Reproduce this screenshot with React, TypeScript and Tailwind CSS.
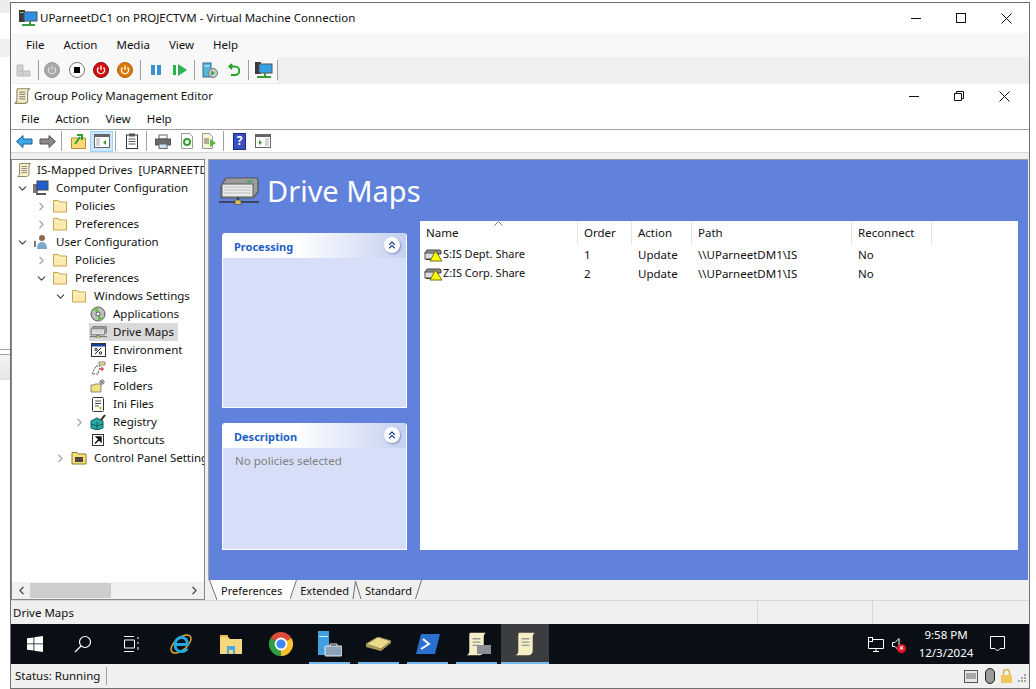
import type { ReactNode } from 'react';
import { ChevronDown, ChevronRight, ChevronLeft, ChevronsUp } from 'lucide-react';

const ui = 'font-["Noto_Sans",sans-serif]';

// --- small drawn icons, all hand traced from the screenshot ---

function Scroll({ size = 16 }: { size?: number }) {
  return (
    <svg width={size} height={size} viewBox="0 0 16 16" className="shrink-0">
      <path d="M4 1.5h10.5c-1 .8-1.5 2-1.5 3.5v7c0 1.5-1 2.500-2.500 2.500H1.500c1.300-.5 2-1.400 2-2.500V3c0-.8.2-1.200.5-1.500z" fill="#f6eec4" stroke="#8c8a6a" />
      <path d="M5.500 4.500h5.500M5.500 6.500h5.500M5.500 8.500h5.500M5.500 10.500h5.500" stroke="#8f8f8f" />
    </svg>
  );
}

function Folder() {
  return (
    <svg width="16" height="16" viewBox="0 0 16 16" className="shrink-0">
      <path d="M1.500 2.500h5l1 1.500h7v10h-13z" fill="#fde9b0" stroke="#c9a94f" />
      <path d="M2 5.500h12" stroke="#fff6d0" />
    </svg>
  );
}

function Drive({ width, height }: { width: number; height: number }) {
  return (
    <svg width={width} height={height} viewBox="0 0 40 28" className="shrink-0">
      <path d="M2 9 7 1h31l1 2v12l-5 6H2z" fill="#9c9c9c" stroke="#555" strokeWidth="1.200" />
      <rect x="3" y="7" width="31" height="13" fill="#e8ece8" stroke="#6a6a6a" strokeWidth="1.200" />
      <path d="M5 10h27M5 13h27M5 16h27" stroke="#bdbdbd" strokeWidth="1.200" />
      <rect x="28" y="3.500" width="5" height="1.800" fill="#22b14c" />
      <path d="M19 20v5M0 25h40" stroke="#333" strokeWidth="1.600" />
      <rect x="16" y="23" width="6" height="4.500" fill="#d8c45a" stroke="#555" strokeWidth=".8" />
    </svg>
  );
}

function WarnDrive() {
  return (
    <svg width="19" height="14" viewBox="0 0 19 14" className="shrink-0">
      <path d="M1 5 3 2h13l1 1v3H1z" fill="#8e8e8e" stroke="#444" />
      <rect x="1" y="5" width="13" height="6" fill="#dcdcdc" stroke="#555" />
      <path d="M2 11.500h10" stroke="#333" />
      <path d="M11.500 3 18 13H6z" fill="#ffff00" stroke="#6b6b1f" />
    </svg>
  );
}

function PowerDot({ bg, ring, icon, className }: { bg: string; ring: string; icon: string; className: string }) {
  return (
    <svg width="16" height="16" viewBox="0 0 16 16" className={`shrink-0 ${className}`}>
      <circle cx="8" cy="8" r="7.500" fill={bg} stroke={ring} />
      <path d="M5.500 5.500a3.600 3.600 0 1 0 5 0M8 3.500V8" fill="none" stroke={icon} strokeWidth="1.300" />
    </svg>
  );
}

function WinMin() {
  return (
    <svg width="10" height="10" viewBox="0 0 10 10" fill="none" stroke="#111">
      <path d="M0 5.500h10" />
    </svg>
  );
}

function WinMax() {
  return (
    <svg width="10" height="10" viewBox="0 0 10 10" fill="none" stroke="#111">
      <rect x=".5" y=".5" width="9" height="9" />
    </svg>
  );
}

function WinRestore() {
  return (
    <svg width="10" height="10" viewBox="0 0 10 10" fill="none" stroke="#111">
      <path d="M.5 2.500h7v7h-7zM2.500 2.500v-2h7v7h-2" />
    </svg>
  );
}

function WinClose() {
  return (
    <svg width="11" height="11" viewBox="0 0 11 11" fill="none" stroke="#111">
      <path d="M.5.5l10 10M10.500.5l-10 10" />
    </svg>
  );
}

function TreeChevron({ open }: { open?: boolean }) {
  return open ? (
    <ChevronDown size={13} strokeWidth={2} className="text-[#404040]" />
  ) : (
    <ChevronRight size={13} strokeWidth={2.400} className="text-[#a8a8a8]" />
  );
}

function TreeRow({
  depth,
  open,
  leaf,
  icon,
  label,
  selected,
}: {
  depth: number;
  open?: boolean;
  leaf?: boolean;
  icon: ReactNode;
  label: string;
  selected?: boolean;
}) {
  return (
    <div className="flex h-[18px] items-center" style={{ paddingLeft: depth * 19 + 4 }}>
      <span className="flex w-[13px] shrink-0 justify-center">{leaf ? null : <TreeChevron open={open} />}</span>
      <span className={`ml-[3px] flex h-full items-center pl-[1px] pr-[4px] ${selected ? 'bg-[#d9d9d9]' : ''}`}>
        <span className="flex w-[16px] shrink-0 justify-center">{icon}</span>
        <span className="ml-[7px] whitespace-nowrap leading-[18px]">{label}</span>
      </span>
    </div>
  );
}

function PolicyBox({ title, bodyHeight, children }: { title: string; bodyHeight: string; children?: ReactNode }) {
  return (
    <div className="w-[185px] overflow-hidden rounded-t-[3px] border-x border-white">
      <div className="flex h-[25px] items-center justify-between bg-gradient-to-r from-white from-40% to-[#c5d0f0] pl-[11px] pr-[6px] pt-[3px]">
        <span className="text-[11px] font-bold text-[#215dc6]">{title}</span>
        <span className="mb-[5px] flex h-[16px] w-[16px] items-center justify-center rounded-full bg-white shadow-[1px_1px_2px_#7f8fc0]">
          <ChevronsUp size={12} strokeWidth={2.200} className="text-[#1c3f9c]" />
        </span>
      </div>
      <div className={`border-b border-white bg-[#d6dff7] px-[12px] pt-[4px] text-[#808080] ${bodyHeight}`}>{children}</div>
    </div>
  );
}

function Sep({ className }: { className: string }) {
  return <span className={`h-[20px] w-px shrink-0 bg-[#a0a0a0] ${className}`} />;
}

function Slot({ w, children }: { w: string; children: ReactNode }) {
  return <div className={`flex h-full shrink-0 items-center justify-center ${w}`}>{children}</div>;
}

function TaskIcon({ children, active }: { children: ReactNode; active?: boolean }) {
  return (
    <div className={`relative flex h-full shrink-0 items-center justify-center ${active ? 'w-[48px] bg-[#3b3d40]' : 'w-[49px]'}`}>
      {children}
      <span className={`absolute bottom-0 h-[2px] bg-[#76b9ed] ${active ? 'inset-x-0' : 'inset-x-[4px]'}`} />
    </div>
  );
}

function Col({ w, border, children }: { w: string; border?: boolean; children: ReactNode }) {
  return <span className={`flex h-full shrink-0 items-center pl-[6px] ${w} ${border ? 'border-l border-[#e5e5e5]' : ''}`}>{children}</span>;
}

const rows = [
  { name: 'S:IS Dept. Share', order: '1' },
  { name: 'Z:IS Corp. Share', order: '2' },
];

export default function App() {
  return (
    <div className={`flex h-[689px] w-[1036px] overflow-hidden bg-white text-[11.5px] text-[#111] ${ui}`}>
      {/* window peeking out behind the VM */}
      <div className="flex w-[10px] shrink-0 flex-col">
        <div className="h-[13px] bg-[#ececec]" />
        <div className="mt-[26px] h-[18px] bg-[#f0f0f0]" />
        <div className="mt-[292px] h-[5px] border-t border-[#a0a0a0]" />
        <div className="h-[26px] border-t border-[#a0a0a0] bg-gradient-to-b from-[#f4f4f4] to-[#e4e4e4]" />
      </div>

      <div className="mt-[2px] flex h-[687px] w-[1020px] shrink-0 flex-col border border-[#707070]">
        {/* VM title bar */}
        <div className="flex h-[30px] shrink-0 items-center bg-white pl-[8px]">
          <svg width="19" height="18" viewBox="0 0 19 18" className="shrink-0">
            <rect x="0" y="1" width="6" height="12" fill="#3a3a3a" />
            <rect x="1" y="3" width="4" height="1" fill="#7fd27f" />
            <rect x="5" y="3" width="13" height="9" fill="#2a8fe6" stroke="#555" />
            <path d="M11 12v3M3 16h13" stroke="#3c9a3c" strokeWidth="2" />
          </svg>
          <span className="ml-[2px]">UParneetDC1 on PROJECTVM - Virtual Machine Connection</span>
          <div className="ml-auto flex items-center gap-[35px] pr-[17px]">
            <WinMin />
            <WinMax />
            <WinClose />
          </div>
        </div>

        {/* VM menu */}
        <div className="flex h-[24px] shrink-0 items-center gap-[19px] bg-[#f8f8f8] pl-[15px]">
          {['File', 'Action', 'Media', 'View', 'Help'].map((m) => (
            <span key={m}>{m}</span>
          ))}
        </div>

        {/* VM toolbar */}
        <div className="flex h-[27px] shrink-0 bg-[#efefef]">
          <div className="flex h-[26px] w-[267px] items-center bg-[#f8f8f8]">
            <svg width="16" height="13" viewBox="0 0 16 13" className="ml-[5px] shrink-0">
              <path d="M1 7V1h6v6h7v5H1z" fill="#cfcfcf" stroke="#bdbdbd" />
              <path d="M1 7h6v5" fill="none" stroke="#bdbdbd" />
            </svg>
            <Sep className="ml-[6px]" />
            <PowerDot className="ml-[5px]" bg="#a8a8a8" ring="#9a9a9a" icon="#dcdcdc" />
            <span className="ml-[9px] flex h-[16px] w-[16px] shrink-0 items-center justify-center rounded-full border border-[#777] bg-white">
              <span className="h-[6px] w-[6px] bg-black" />
            </span>
            <PowerDot className="ml-[8px]" bg="#d40f12" ring="#8a0c0c" icon="#fff" />
            <PowerDot className="ml-[8px]" bg="#d97706" ring="#b56205" icon="#fff" />
            <Sep className="ml-[7px]" />
            <svg width="12" height="12" viewBox="0 0 12 12" className="ml-[9px] shrink-0">
              <path d="M1 1h4v10H1zM7 1h4v10H7z" fill="#3d8fd1" />
            </svg>
            <svg width="15" height="12" viewBox="0 0 15 12" className="ml-[11px] shrink-0">
              <path d="M0 1h3v10H0z M5 0l9 6-9 6z" fill="#2bb24c" />
            </svg>
            <Sep className="ml-[6px]" />
            <svg width="16" height="16" viewBox="0 0 16 16" className="ml-[7px] shrink-0">
              <rect x="1" y="1" width="8" height="14" fill="#58b4d8" stroke="#2d6e8c" />
              <path d="M2 4h6" stroke="#d8f0fa" />
              <circle cx="11" cy="11" r="4.500" fill="#c8c8c8" stroke="#777" />
              <path d="M9 8.500l4 2.500-4 2.500z" fill="#2bb24c" />
            </svg>
            <svg width="12" height="14" viewBox="0 0 12 14" className="ml-[10px] shrink-0">
              <path d="M4 1 1.500 3.500 4 6M2 3.500h5a3.800 3.800 0 0 1 0 8.500H3" fill="none" stroke="#2aa12a" strokeWidth="2" />
            </svg>
            <Sep className="ml-[8px]" />
            <svg width="18" height="17" viewBox="0 0 18 17" className="ml-[6px] shrink-0">
              <rect x="0" y="0" width="6" height="12" fill="#3a3a3a" />
              <rect x="4" y="2" width="13" height="9" fill="#35a0e6" stroke="#555" />
              <path d="M10 11v3M2 15h14" stroke="#3c9a3c" strokeWidth="2" />
            </svg>
            <Sep className="ml-[4px]" />
          </div>
        </div>

        {/* GPME title + menu */}
        <div className="flex h-[24px] shrink-0 items-center bg-white pl-[2px]">
          <Scroll size={18} />
          <span className="ml-[3px]">Group Policy Management Editor</span>
          <div className="ml-auto flex items-center gap-[35px] pr-[19px]">
            <WinMin />
            <WinRestore />
            <WinClose />
          </div>
        </div>
        <div className="flex h-[22px] shrink-0 items-center gap-[16px] border-b border-[#a0a0a0] bg-white pl-[10px]">
          {['File', 'Action', 'View', 'Help'].map((m) => (
            <span key={m}>{m}</span>
          ))}
        </div>

        {/* GPME toolbar */}
        <div className="flex h-[23px] shrink-0 items-center border-b border-[#d8d8d8] bg-white">
          <svg width="17" height="13" viewBox="0 0 17 13" className="ml-[5px] shrink-0">
            <path d="M7 .5 .5 6.500 7 12.500V9h9V4H7z" fill="#3fa9e8" stroke="#1a5f9c" />
          </svg>
          <svg width="17" height="13" viewBox="0 0 17 13" className="ml-[6px] shrink-0">
            <path d="M10 .5 16.500 6.500 10 12.500V9H1V4h9z" fill="#8a8a8a" stroke="#555" />
          </svg>
          <Sep className="ml-[5px]" />
          <svg width="15" height="16" viewBox="0 0 15 16" className="ml-[9px] shrink-0">
            <path d="M.5 5h14v10.500H.5z" fill="#fbd878" stroke="#b58f30" />
            <path d="M4 11 9 4M6 2h5v5" fill="none" stroke="#2f9e2f" strokeWidth="2" />
          </svg>
          <span className="ml-[4px] flex h-[21px] w-[23px] shrink-0 items-center justify-center border border-[#99d1ff] bg-[#cce8ff]">
            <svg width="16" height="14" viewBox="0 0 16 14">
              <rect x=".5" y=".5" width="15" height="13" fill="#fff" stroke="#666" />
              <rect x="1" y="1" width="14" height="2" fill="#666" />
              <path d="M2 5h4M2 7h4M2 9h4M2 11h4" stroke="#aaa" />
              <path d="M12 6v5L9 8.500z" fill="#2f9e2f" />
            </svg>
          </span>
          <Sep className="ml-[2px]" />
          <svg width="12" height="16" viewBox="0 0 12 16" className="ml-[10px] shrink-0">
            <rect x=".5" y="2" width="11" height="13.500" fill="#fff" stroke="#333" />
            <rect x="3" y=".5" width="6" height="3" fill="#555" />
            <path d="M2.500 6h7M2.500 8.500h7M2.500 11h7" stroke="#555" />
          </svg>
          <Sep className="ml-[8px]" />
          <svg width="16" height="15" viewBox="0 0 16 15" className="ml-[8px] shrink-0">
            <rect x="4" y="1" width="8" height="4" fill="#fff" stroke="#666" />
            <rect x=".5" y="5" width="15" height="6" fill="#6a6a6a" stroke="#555" />
            <rect x="4" y="10" width="8" height="4.500" fill="#cfe6f7" stroke="#666" />
          </svg>
          <svg width="14" height="16" viewBox="0 0 14 16" className="ml-[9px] shrink-0">
            <path d="M1.500.5h8l3 3v12h-11z" fill="#fff" stroke="#999" />
            <circle cx="7" cy="9" r="3" fill="none" stroke="#2f9e2f" strokeWidth="2" />
          </svg>
          <svg width="16" height="16" viewBox="0 0 16 16" className="ml-[7px] shrink-0">
            <path d="M1.500.5h7l3 3v12h-10z" fill="#fbf5d8" stroke="#999" />
            <path d="M3 6h5M3 8h5M3 10h5" stroke="#666" />
            <path d="M9 6l6 4-6 4z" fill="#5dbb3f" />
          </svg>
          <Sep className="ml-[6px]" />
          <span className="ml-[9px] flex h-[17px] w-[13px] shrink-0 items-center justify-center border border-[#1c2a80] bg-[#3a4fc0] text-[12px] font-bold leading-none text-white">?</span>
          <svg width="16" height="14" viewBox="0 0 16 14" className="ml-[9px] shrink-0">
            <rect x=".5" y=".5" width="15" height="13" fill="#fff" stroke="#666" />
            <rect x="1" y="1" width="14" height="2" fill="#666" />
            <path d="M10 5h4M10 7h4M10 9h4M10 11h4" stroke="#aaa" />
            <path d="M4 6v5l3-2.500z" fill="#2f9e2f" />
          </svg>
        </div>

        {/* main split */}
        <div className="flex min-h-0 flex-1 bg-[#f0f0f0] pt-[6px]">
          <div className="flex w-[194px] shrink-0 flex-col border border-[#828790] bg-white">
            <div className="min-h-0 flex-1 overflow-hidden pt-[1px]">
              <div className="flex h-[18px] items-center pl-[4px]">
                <Scroll />
                <span className="ml-[5px] whitespace-pre">IS-Mapped Drives  [UPARNEETD</span>
              </div>
              <TreeRow depth={0} open icon={<svg width="16" height="16" viewBox="0 0 16 16"><rect x="0" y="4" width="5" height="9" fill="#777" /><rect x="4" y="1" width="11" height="9" fill="#1d5fd0" stroke="#444" /><path d="M3 14h10" stroke="#555" strokeWidth="2" /></svg>} label="Computer Configuration" />
              <TreeRow depth={1} icon={<Folder />} label="Policies" />
              <TreeRow depth={1} icon={<Folder />} label="Preferences" />
              <TreeRow depth={0} open icon={<svg width="16" height="16" viewBox="0 0 16 16"><circle cx="9" cy="4" r="3" fill="#8a6a4a" /><path d="M4 15c0-5 2-7 5-7s5 2 5 7z" fill="#7fa8c8" /><path d="M2 7v6" stroke="#777" strokeWidth="2" /></svg>} label="User Configuration" />
              <TreeRow depth={1} icon={<Folder />} label="Policies" />
              <TreeRow depth={1} open icon={<Folder />} label="Preferences" />
              <TreeRow depth={2} open icon={<Folder />} label="Windows Settings" />
              <TreeRow depth={3} leaf icon={<svg width="16" height="16" viewBox="0 0 16 16"><circle cx="8" cy="8" r="7" fill="#bdbdbd" stroke="#555" /><path d="M8 8 3 3a7 7 0 0 1 5-2zM8 8l5 5a7 7 0 0 1-5 2z" fill="#6fbf4a" /><circle cx="8" cy="8" r="2" fill="#fff" stroke="#555" /></svg>} label="Applications" />
              <TreeRow depth={3} leaf icon={<Drive width={17} height={14} />} label="Drive Maps" selected />
              <TreeRow depth={3} leaf icon={<svg width="15" height="14" viewBox="0 0 15 14"><rect x=".5" y=".5" width="14" height="13" fill="#fff" stroke="#333" /><rect x="1" y="1" width="13" height="2.500" fill="#1c3f9c" /><path d="M4 11l6-6" stroke="#222" /><circle cx="5" cy="6.500" r="1.200" fill="none" stroke="#222" /><circle cx="9.500" cy="10" r="1.200" fill="none" stroke="#222" /></svg>} label="Environment" />
              <TreeRow depth={3} leaf icon={<svg width="16" height="16" viewBox="0 0 16 16"><path d="M2 14 6 6h4l-2 8z" fill="#fff" stroke="#555" strokeDasharray="2 1" /><path d="M9 2h6v3H9z" fill="#f2e27a" stroke="#888" /><path d="M10 9h4M12 7v4" stroke="#d01515" /></svg>} label="Files" />
              <TreeRow depth={3} leaf icon={<svg width="16" height="16" viewBox="0 0 16 16"><path d="M1 7h3l1-1h6v8H1z" fill="#f2e27a" stroke="#888" /><path d="M12 1v6M9 4h6M10 2l4 4M14 2l-4 4" stroke="#777" /></svg>} label="Folders" />
              <TreeRow depth={3} leaf icon={<svg width="14" height="16" viewBox="0 0 14 16"><rect x="1.500" y="1.500" width="11" height="14" rx="1" fill="#fff" stroke="#333" /><path d="M4 5h6M4 7.500h6M4 10h4" stroke="#555" /><circle cx="9.500" cy="12" r="1.500" fill="#d8c030" /></svg>} label="Ini Files" />
              <TreeRow depth={3} icon={<svg width="16" height="16" viewBox="0 0 16 16"><path d="M1 7 7 4l6 3v7l-6 2-6-2z" fill="#2aa6a6" stroke="#0f5f5f" /><path d="M1 10l6 2 6-2M7 8v8" fill="none" stroke="#0f5f5f" /><path d="M11 6 15 1" stroke="#222" strokeWidth="2" /></svg>} label="Registry" />
              <TreeRow depth={3} leaf icon={<svg width="12" height="12" viewBox="0 0 12 12"><rect x=".5" y=".5" width="11" height="11" fill="#fff" stroke="#333" /><path d="M3 9.500 8 4.500M4.500 3h4.500v4.500z" fill="#111" stroke="#111" strokeWidth="1.400" /></svg>} label="Shortcuts" />
              <TreeRow depth={2} icon={<svg width="16" height="14" viewBox="0 0 16 14"><path d="M1 1.500h5l1 1.500h8v10H1z" fill="#f7e37a" stroke="#8f7d2a" /><path d="M4 6h8v5H4z" fill="#444" /><path d="M5 9h2M9 8h2" stroke="#e03030" /></svg>} label="Control Panel Settings" />
            </div>
            <div className="flex h-[17px] shrink-0 items-center bg-[#f0f0f0] pl-[3px] pr-[3px]">
              <ChevronLeft size={13} strokeWidth={2.500} className="text-[#555]" />
              <div className="ml-[2px] h-[15px] w-[81px] bg-[#cdcdcd]" />
              <ChevronRight size={13} strokeWidth={2.500} className="ml-auto text-[#555]" />
            </div>
          </div>

          <div className="ml-[3px] flex min-w-0 flex-1 flex-col pr-[1px]">
            <div className="flex min-h-0 flex-1 flex-col border-t border-l border-[#a0a0a0] bg-[#6082dc] pr-[10px]">
              <div className="flex h-[61px] shrink-0 items-center pl-[10px]">
                <Drive width={40} height={28} />
                <span className="ml-[8px] text-[29px] leading-none text-white">Drive Maps</span>
              </div>
              <div className="flex min-h-0 flex-1 pb-[30px] pl-[13px]">
                <div className="flex w-[185px] shrink-0 flex-col justify-start gap-[15px] pt-[12px]">
                  <PolicyBox title="Processing" bodyHeight="h-[150px]" />
                  <PolicyBox title="Description" bodyHeight="h-[102px]">
                    No policies selected
                  </PolicyBox>
                </div>
                <div className="ml-[13px] flex-1 bg-white">
                  <div className="relative flex h-[24px] items-center">
                    <svg width="9" height="5" viewBox="0 0 9 5" fill="none" stroke="#777" className="absolute left-[74px] top-0">
                      <path d="M.5 4.500l4-4 4 4" />
                    </svg>
                    <Col w="w-[157px]">Name</Col>
                    <Col w="w-[54px]" border>Order</Col>
                    <Col w="w-[60px]" border>Action</Col>
                    <Col w="w-[160px]" border>Path</Col>
                    <Col w="w-[80px]" border>Reconnect</Col>
                    <span className="h-full w-px bg-[#e5e5e5]" />
                  </div>
                  {rows.map((r) => (
                    <div key={r.name} className="flex h-[19px] items-center">
                      <div className="flex w-[157px] items-center pl-[4px]">
                        <WarnDrive />
                        <span className="whitespace-nowrap text-[11px]">{r.name}</span>
                      </div>
                      <span className="w-[54px] pl-[7px]">{r.order}</span>
                      <span className="w-[60px] pl-[7px]">Update</span>
                      <span className="w-[160px] pl-[7px]">\\UParneetDM1\IS</span>
                      <span className="pl-[7px]">No</span>
                    </div>
                  ))}
                </div>
              </div>
            </div>
            {/* tabs */}
            <div className="flex h-[20px] shrink-0 items-stretch bg-[#f0f0f0] pl-[1px] text-[11px]">
              <svg width="8" height="20" viewBox="0 0 8 20" className="shrink-0">
                <path d="M0 0h8v20z" fill="#fff" />
                <path d="M.5 0 8 20" fill="none" stroke="#707070" />
              </svg>
              <span className="bg-white pl-[4px] pr-[8px] leading-[21px]">Preferences</span>
              <svg width="7" height="20" viewBox="0 0 7 20" className="shrink-0">
                <path d="M0 0h7L0 20z" fill="#fff" />
                <path d="M6.500 0 0 19" fill="none" stroke="#707070" />
              </svg>
              <span className="pl-[3px] pr-[2px] leading-[21px]">Extended</span>
              <svg width="13" height="20" viewBox="0 0 13 20" fill="none" stroke="#707070" className="shrink-0">
                <path d="M2 19 4.500 1 10 19" />
              </svg>
              <span className="pl-[1px] pr-[3px] leading-[21px]">Standard</span>
              <svg width="7" height="20" viewBox="0 0 7 20" fill="none" stroke="#707070" className="shrink-0">
                <path d="M6.500 0 .5 19" />
              </svg>
            </div>
          </div>
        </div>

        {/* GPME status bar */}
        <div className="flex h-[24px] shrink-0 items-center border-t border-[#d8d8d8] bg-[#f0f0f0]">
          <span className="w-[746px] pl-[2px]">Drive Maps</span>
          <span className="h-full w-px bg-[#d8d8d8]" />
          <span className="ml-[114px] h-full w-px bg-[#d8d8d8]" />
        </div>

        {/* guest task bar */}
        <div className="flex h-[40px] shrink-0 items-center bg-[#0a0f16] text-white">
          <Slot w="w-[48px]">
            <svg width="16" height="16" viewBox="0 0 16 16" fill="#fff"><path d="M0 2.300 6.500 1.400v6.100H0zM7.300 1.300 16 0v7.500H7.300zM0 8.300h6.500v6.300L0 13.700zM7.300 8.300H16V16l-8.700-1.200z" /></svg>
          </Slot>
          <Slot w="w-[48px]">
            <svg width="18" height="18" viewBox="0 0 18 18" fill="none" stroke="#fff" strokeWidth="1.200"><circle cx="11" cy="7" r="5.500" /><path d="M7 11 1 17" /></svg>
          </Slot>
          <Slot w="w-[49px]">
            <svg width="16" height="16" viewBox="0 0 16 16" fill="none" stroke="#fff"><path d="M0 .5h10M0 15.500h10M.5 4h10v8H.5zM14 1v2M14 6v2M14 11v3" /></svg>
          </Slot>
          <Slot w="w-[50px]">
            <svg width="22" height="24" viewBox="0 0 22 24" fill="none">
              <ellipse cx="11" cy="12" rx="12" ry="6" transform="rotate(-40 11 12)" stroke="#e0b030" strokeWidth="1.400" />
              <path d="M5 12.500h12.500C17.500 8 15 5.500 11.500 5.500S5 8.500 5 12.500s2.500 7 6.500 7c2.500 0 4.500-1 5.500-3" stroke="#25a7e0" strokeWidth="3" />
            </svg>
          </Slot>
          <Slot w="w-[50px]">
            <svg width="22" height="19" viewBox="0 0 22 19"><path d="M0 2h8l2 2h12v15H0z" fill="#f6d77b" /><rect x="0" y="0" width="8" height="2" fill="#e8b84a" /><rect x="7" y="11" width="8" height="8" fill="#48a9e6" /><rect x="9" y="15" width="4" height="4" fill="#f6d77b" /></svg>
          </Slot>
          <Slot w="w-[49px]">
            <svg width="24" height="24" viewBox="0 0 24 24">
              <path d="M12 12 1.600 6A12 12 0 0 1 22.400 6z" fill="#dd4b39" />
              <path d="M12 12 22.400 6A12 12 0 0 1 12 24z" fill="#fbc02d" />
              <path d="M12 12V24A12 12 0 0 1 1.600 6z" fill="#2f9e44" />
              <circle cx="12" cy="12" r="5.500" fill="#4285f4" stroke="#fff" strokeWidth="1.800" />
            </svg>
          </Slot>
          <TaskIcon>
            <svg width="24" height="26" viewBox="0 0 24 26"><rect x="0" y="0" width="11" height="24" fill="#3f9fe0" /><rect x="1" y="5" width="9" height="1" fill="#d8eefc" /><rect x="7" y="15" width="17" height="10" rx="1" fill="#8aa3b8" stroke="#e8eef2" /><path d="M12 15v-2h7v2" fill="none" stroke="#e8eef2" /></svg>
          </TaskIcon>
          <TaskIcon>
            <svg width="25" height="14" viewBox="0 0 25 14"><path d="M0 7 12 0l13 4-10 8z" fill="#e9d98a" stroke="#8f8450" /><path d="M0 7v3l15 4 10-8V4l-10 8z" fill="#a89a58" /></svg>
          </TaskIcon>
          <TaskIcon>
            <svg width="24" height="20" viewBox="0 0 24 20"><path d="M5 0h19l-5 20H0z" fill="#2b6fcf" /><path d="M7 5l6 5-8 5" fill="none" stroke="#fff" strokeWidth="2" /></svg>
          </TaskIcon>
          <TaskIcon>
            <span className="relative flex">
              <svg width="21" height="24" viewBox="0 0 16 18"><path d="M3 .5h12c-1 1-1.500 2-1.500 3.500v10c0 2-1 3.500-3 3.500H.5c1.500-.7 2-1.700 2-3V3c0-1 .2-2 .5-2.500z" fill="#f6eec4" /><path d="M5 5h6M5 7.500h6M5 10h6" stroke="#999" /></svg>
              <span className="absolute bottom-[2px] -right-[4px] h-[9px] w-[14px] bg-[#8a8f94]" />
            </span>
          </TaskIcon>
          <TaskIcon active>
            <svg width="21" height="24" viewBox="0 0 16 18"><path d="M3 .5h12c-1 1-1.500 2-1.500 3.500v10c0 2-1 3.500-3 3.500H.5c1.500-.7 2-1.700 2-3V3c0-1 .2-2 .5-2.500z" fill="#f6eec4" /><path d="M5 5h6M5 7.500h6M5 10h6" stroke="#999" /></svg>
          </TaskIcon>

          <div className="ml-auto flex h-full items-center pr-[24px]">
            <svg width="16" height="15" viewBox="0 0 16 15" fill="none" stroke="#fff" className="mr-[8px]"><path d="M4 2.500h11.500v9H.5V5M8 11.500v3M5 14.500h6" /><rect x=".5" y=".5" width="4" height="4" fill="#0a0f16" /></svg>
            <span className="relative mr-[16px] flex">
              <svg width="10" height="13" viewBox="0 0 10 13" fill="none" stroke="#fff"><path d="M.5 4.500h2.500l4-4v12l-4-4H.5z" /></svg>
              <span className="absolute -bottom-[2px] -right-[4px] flex h-[9px] w-[9px] items-center justify-center rounded-full bg-[#e81123] text-[8px] font-bold leading-none text-white">×</span>
            </span>
            <div className="flex w-[56px] flex-col items-center leading-[18px]">
              <span>9:58 PM</span>
              <span>12/3/2024</span>
            </div>
            <svg width="15" height="16" viewBox="0 0 15 16" fill="none" stroke="#fff" className="ml-[16px]"><path d="M.5.5h14v12H10l-2.500 2.500L5 12.500H.5z" /></svg>
          </div>
        </div>

        {/* VM status bar */}
        <div className="flex h-[24px] shrink-0 items-center bg-[#f0f0f0]">
          <span className="ml-[4px]">Status: Running</span>
          <span className="ml-[6px] h-[18px] w-px bg-[#a0a0a0]" />
          <div className="ml-auto flex items-center pr-[3px]">
            <svg width="14" height="13" viewBox="0 0 14 13"><rect x=".5" y=".5" width="13" height="12" fill="#e8e8e8" stroke="#555" /><path d="M2 4h10M2 6h10M2 8h10" stroke="#666" /></svg>
            <svg width="10" height="16" viewBox="0 0 10 16" className="ml-[7px]"><rect x=".5" y=".5" width="9" height="15" rx="4.500" fill="#999" stroke="#222" /></svg>
            <svg width="11" height="14" viewBox="0 0 11 14" className="ml-[6px]"><path d="M2.500 6V3.500a3 3 0 0 1 6 0V6" fill="none" stroke="#d8b24a" strokeWidth="1.500" /><rect x="0" y="6" width="11" height="8" fill="#f0c75e" /></svg>
            <svg width="9" height="9" viewBox="0 0 9 9" fill="#a8a8a8" className="ml-[5px] self-end mb-[1px]"><path d="M7 0h2v2H7zM4 3h2v2H4zM7 3h2v2H7zM1 6h2v2H1zM4 6h2v2H4zM7 6h2v2H7z" /></svg>
          </div>
        </div>
      </div>
      <div className="flex-1 bg-white" />
    </div>
  );
}
